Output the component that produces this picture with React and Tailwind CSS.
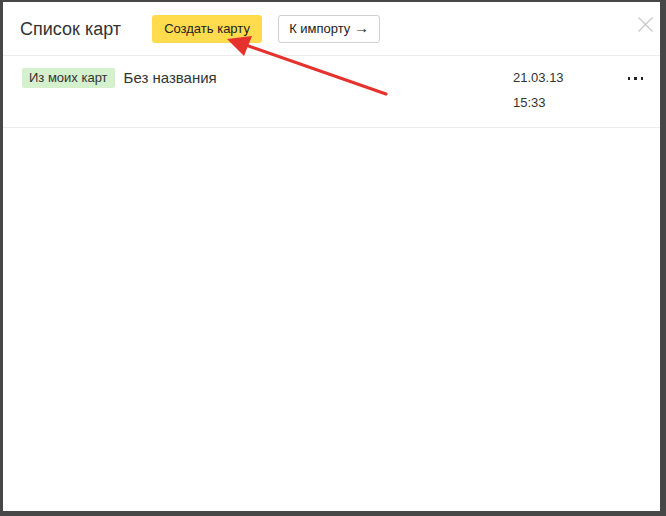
import React from "react";

const App = () => {
  return (
    <div
      className="relative w-[666px] h-[516px] bg-[#474747] pl-[3px] pt-[2px] pr-[6px] pb-[5px]"
      style={{ fontFamily: '"Liberation Sans", Arial, sans-serif' }}
    >
      <div className="flex flex-col w-full h-full bg-white">
        {/* header */}
        <div className="flex items-center h-[54px] border-b border-[#ebebeb] pl-[17px] pr-[7px]">
          <h1 className="text-[18px] text-[#333] leading-none">Список карт</h1>
          <button className="ml-[31px] h-[28px] w-[110px] rounded-[3px] bg-[#ffdb4d] text-[13px] text-[#222]">
            Создать карту
          </button>
          <button className="ml-[16px] h-[28px] w-[102px] rounded-[3px] border border-[#d0d0d0] bg-white text-[13px] text-[#222]">
            К импорту <span className="text-[15px]">→</span>
          </button>
          <button className="ml-auto mb-[8px] w-[15px] h-[15px] text-[#c8c8c8]">
            <svg viewBox="0 0 15 15" width="15" height="15">
              <path d="M0.5 0.5L14.5 14.5M14.5 0.5L0.5 14.5" stroke="currentColor" strokeWidth="1.3" />
            </svg>
          </button>
        </div>

        {/* row */}
        <div className="flex h-[72px] border-b border-[#ebebeb] pl-[19px] pr-[17px] pt-[12px]">
          <div className="flex items-center h-[20px] flex-1">
            <span className="h-[20px] px-[7px] rounded-[2px] bg-[#d5f0cc] text-[13px] leading-[20px] text-[#333]">
              Из моих карт
            </span>
            <span className="ml-[9px] text-[15px] text-[#333]">Без названия</span>
          </div>
          <div className="w-[115px] text-[13px] text-[#333] leading-[25px] -mt-[3px]">
            <div>21.03.13</div>
            <div>15:33</div>
          </div>
          <div className="flex gap-[4px] h-[20px] pt-[9px] w-[15px]">
            <span className="w-[2.5px] h-[2.5px] bg-[#222]" />
            <span className="w-[2.5px] h-[2.5px] bg-[#222]" />
            <span className="w-[2.5px] h-[2.5px] bg-[#222]" />
          </div>
        </div>

        <div className="flex-1" />
      </div>

      {/* annotation arrow */}
      <svg className="absolute left-0 top-0 pointer-events-none" width="666" height="516">
        <line x1="386" y1="94" x2="240" y2="43" stroke="#e5322d" strokeWidth="3.2" strokeLinecap="round" />
        <polygon points="227,39 252,36 244,56" fill="#e5322d" />
      </svg>
    </div>
  );
};

export default App;
